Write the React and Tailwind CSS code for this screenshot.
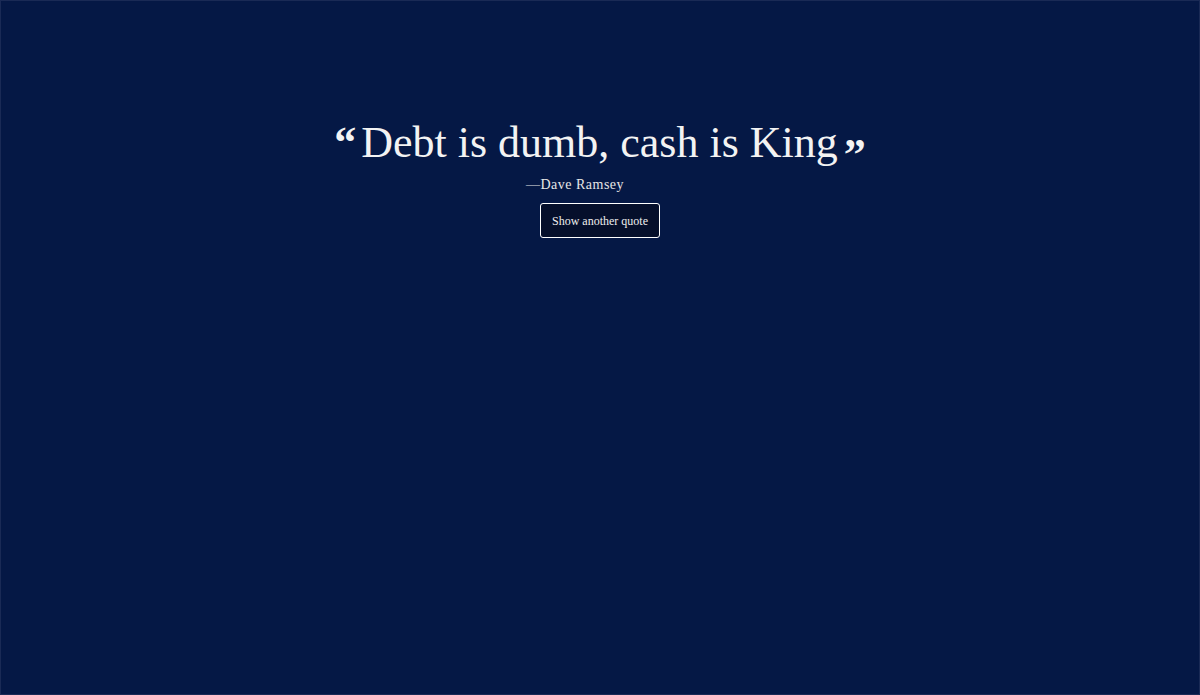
import React from "react";

const quote = { text: "Debt is dumb, cash is King", author: "Dave Ramsey" };

export default function App() {
  return (
    <div
      className="w-screen h-[695px] bg-[#051845] border border-[#1a2a55] flex flex-col items-center pt-[110px]"
      style={{ fontFamily: '"Liberation Serif", "DejaVu Serif", serif' }}
    >
      <div className="flex items-start text-[#f3f3f3]">
        <span className="text-[44px] font-bold leading-none mt-[10px] mr-[5px]">“</span>
        <h1 className="text-[44px] leading-[64px]">{quote.text}</h1>
        <span className="text-[44px] font-bold leading-none mt-[22px] ml-[6px]">”</span>
      </div>
      <p className="text-[14px] tracking-[0.5px] text-[#e6e6e6] -mt-[3px] mr-[50px]">
        —{quote.author}
      </p>
      <button className="mt-[8px] w-[120px] h-[35px] rounded-[3px] border border-white bg-[#050f2b] text-[12px] text-[#eeeeee]">
        Show another quote
      </button>
    </div>
  );
}
